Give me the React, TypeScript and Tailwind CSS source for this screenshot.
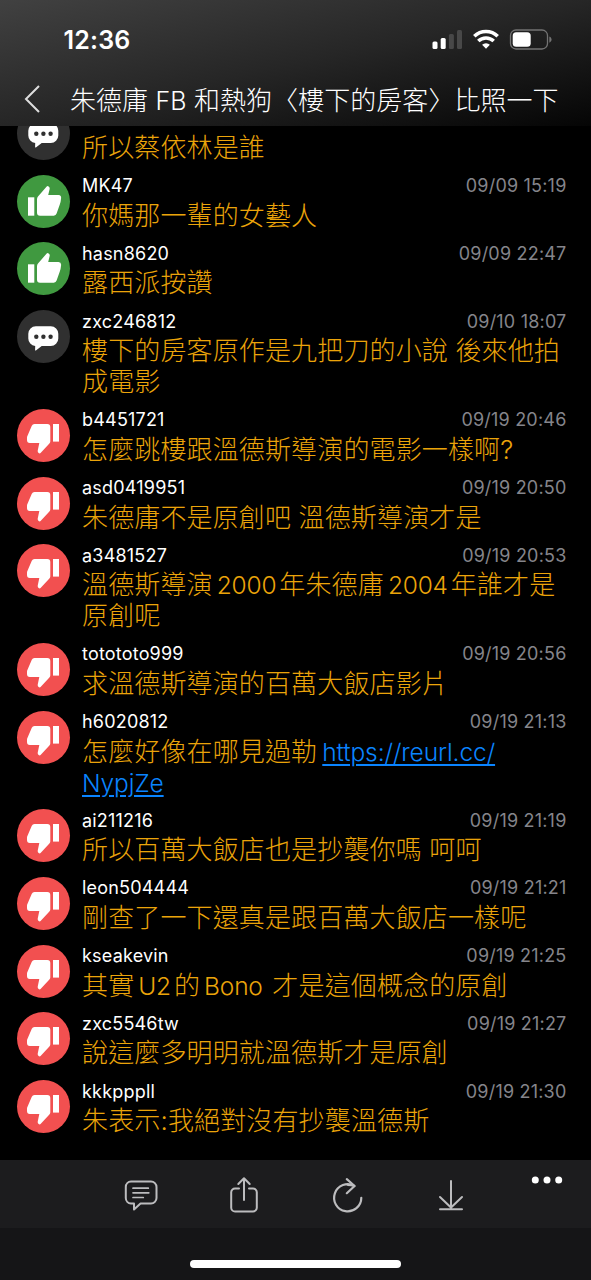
import type { ReactNode } from "react";

type Kind = "push" | "boo" | "arrow";

interface Comment {
  kind: Kind;
  user: string;
  date: string;
  body: ReactNode;
}

function Latin({ children }: { children: string }) {
  return <span className="mr-[3px] ml-[4px] text-[24.500px] leading-[20px] tracking-[-0.2px]">{children}</span>;
}

function Link({ children }: { children: string }) {
  return (
    <a
      href="#"
      className="text-[24.500px] leading-[20px] tracking-[-0.100px] text-[#0a84ff] underline decoration-[1.5px] underline-offset-[3px]"
    >
      {children}
    </a>
  );
}

const comments: Comment[] = [
  { kind: "arrow", user: "", date: "", body: "所以蔡依林是誰" },
  { kind: "push", user: "MK47", date: "09/09 15:19", body: "你媽那一輩的女藝人" },
  { kind: "push", user: "hasn8620", date: "09/09 22:47", body: "露西派按讚" },
  {
    kind: "arrow",
    user: "zxc246812",
    date: "09/10 18:07",
    body: (
      <>
        樓下的房客原作是九把刀的小說 後來他拍
        <br />
        成電影
      </>
    ),
  },
  { kind: "boo", user: "b4451721", date: "09/19 20:46", body: "怎麼跳樓跟溫德斯導演的電影一樣啊?" },
  { kind: "boo", user: "asd0419951", date: "09/19 20:50", body: "朱德庸不是原創吧 溫德斯導演才是" },
  {
    kind: "boo",
    user: "a3481527",
    date: "09/19 20:53",
    body: (
      <>
        溫德斯導演<Latin>2000</Latin>年朱德庸<Latin>2004</Latin>年誰才是
        <br />
        原創呢
      </>
    ),
  },
  { kind: "boo", user: "totototo999", date: "09/19 20:56", body: "求溫德斯導演的百萬大飯店影片" },
  {
    kind: "boo",
    user: "h6020812",
    date: "09/19 21:13",
    body: (
      <>
        <span className="mr-[5px]">怎麼好像在哪見過勒</span>
        <Link>https://reurl.cc/</Link>
        <br />
        <Link>NypjZe</Link>
      </>
    ),
  },
  { kind: "boo", user: "ai211216", date: "09/19 21:19", body: "所以百萬大飯店也是抄襲你嗎 呵呵" },
  { kind: "boo", user: "leon504444", date: "09/19 21:21", body: "剛查了一下還真是跟百萬大飯店一樣呢" },
  {
    kind: "boo",
    user: "kseakevin",
    date: "09/19 21:25",
    body: (
      <>
        其實<Latin>U2</Latin>的<Latin>Bono </Latin>才是這個概念的原創
      </>
    ),
  },
  { kind: "boo", user: "zxc5546tw", date: "09/19 21:27", body: "說這麼多明明就溫德斯才是原創" },
  { kind: "boo", user: "kkkpppll", date: "09/19 21:30", body: "朱表示:我絕對沒有抄襲溫德斯" },
];

const badgeColor: Record<Kind, string> = {
  push: "bg-[#409940]",
  boo: "bg-[#f25050]",
  arrow: "bg-[#303030]",
};

function Badge({ kind }: { kind: Kind }) {
  return (
    <div className={`size-[53px] shrink-0 rounded-full ${badgeColor[kind]}`}>
      <svg viewBox="0 0 53 53" className="size-[53px]" fill="white">
        {kind === "push" && (
          <>
            <path d="M11 22.300h6.300v18.400H11z" />
            <path d="M20 24.200q0-1.500 1-2.600L29.700 11.500q.8-.9 1.900-.1 1.300.9 1.100 2.300L31.200 20h10.300q3 .3 2.600 3.300-.3 3.500-1.300 6.300l-3.200 9q-.7 2.100-2.800 2.100H23q-3 0-3-3z" />
          </>
        )}
        {kind === "boo" && (
          <>
            <path d="M36 15h6v17.600h-6z" />
            <path d="M33.300 32.500q0 1.200-.9 2.100L23.800 43.800q-1 1.100-2.200.2-1.100-.9-.9-2.300L22.300 34H12.800q-2.800-.2-2.800-3V28.700q0-.8.4-1.700l4.400-10.200Q15.600 15 17.500 15h12.800q3 0 3 3z" />
          </>
        )}
        {kind === "arrow" && (
          <>
            <path d="M18.800 16.300h15a7.500 7.500 0 0 1 7.500 7.500v4.700a7.500 7.500 0 0 1-7.500 7.500H24.700l-5.800 4.400c-.5.300-.9.100-.8-.5l.1-3.900a7.500 7.500 0 0 1-6.900-7.500v-4.700a7.500 7.500 0 0 1 7.500-7.500z" />
            <circle cx="19.300" cy="26.700" r="2.200" fill="#303030" />
            <circle cx="26.400" cy="26.700" r="2.200" fill="#303030" />
            <circle cx="33.600" cy="26.700" r="2.200" fill="#303030" />
          </>
        )}
      </svg>
    </div>
  );
}

function CommentRow({ comment }: { comment: Comment }) {
  return (
    <li className="flex gap-[12px] pr-[24.500px] pb-[11.700px] pl-[17px]">
      <Badge kind={comment.kind} />
      <div className="min-w-0 flex-1">
        <div className="flex h-[25px] justify-between pt-[0.500px] text-[18px] leading-[22px]">
          <span className="tracking-[0.2px] text-white">{comment.user}</span>
          <span className="tracking-[0.2px] text-[#85858b]">{comment.date}</span>
        </div>
        <p className="text-[26px] leading-[31px] font-light tracking-[0.14px] whitespace-nowrap text-[#eba40a]">
          {comment.body}
        </p>
      </div>
    </li>
  );
}

function StatusBar() {
  return (
    <div className="flex h-[72px] items-start justify-between pt-[22px] pr-[39px] pl-[63.500px]">
      <span className="text-[25px] leading-[36px] font-semibold tracking-[0.2px] text-white">12:36</span>
      <svg viewBox="0 0 120 22" className="mt-[7px] h-[22px] w-[120px]">
        <rect x="0.500" y="12.500" width="5" height="7.500" rx="1.500" fill="white" />
        <rect x="8.700" y="9" width="5" height="11" rx="1.500" fill="white" />
        <rect x="16.900" y="5" width="5" height="15" rx="1.500" fill="#484848" />
        <rect x="25" y="1" width="5" height="19" rx="1.500" fill="#484848" />
        <g fill="none" stroke="white" strokeWidth="3.500">
          <path d="M42.300 7.300a16.500 16.500 0 0 1 23.400 0" />
          <path d="M46.300 12.100a11 11 0 0 1 15.400 0" />
        </g>
        <path d="M54 19.800l-3.900-4a5.700 5.700 0 0 1 7.800 0z" fill="white" />
        <rect x="78.500" y="1" width="37" height="19" rx="5.500" fill="none" stroke="#737373" strokeWidth="1.300" />
        <rect x="80.700" y="3.300" width="18" height="14.400" rx="3.500" fill="white" />
        <path d="M117.300 7.500c3 1.200 3 5 0 6.200z" fill="#737373" />
      </svg>
    </div>
  );
}

function Toolbar() {
  return (
    <footer className="h-[120px] shrink-0 bg-[#151517]">
      <div className="flex h-[68px] items-center bg-[#1c1c1e] pt-[2px] pl-[121px] text-[#bcbcbe]">
        <svg viewBox="0 0 40 40" className="size-[40px]" fill="none" stroke="currentColor" strokeWidth="2" strokeLinecap="round" strokeLinejoin="round">
          <path d="M10 6.500h20a5.500 5.500 0 0 1 5.500 5.500v11a5.500 5.500 0 0 1-5.500 5.500H19.500L13 34.500v-6h-3A5.500 5.500 0 0 1 4.800 23V12A5.500 5.500 0 0 1 10 6.500z" />
          <path d="M12 13.200h15.300M12 17.800h15.800M12 22.500h10.300" strokeWidth="1.700" />
        </svg>
        <svg viewBox="0 0 40 40" className="ml-[63px] size-[40px]" fill="none" stroke="currentColor" strokeWidth="2" strokeLinecap="round" strokeLinejoin="round">
          <path d="M15 13.500h-4a3.800 3.800 0 0 0-3.800 3.800v15.400a3.800 3.800 0 0 0 3.800 3.800h18a3.800 3.800 0 0 0 3.800-3.800V17.300a3.800 3.800 0 0 0-3.800-3.800h-4" />
          <path d="M20 25V3.300M14.300 9L20 3.300 25.700 9" />
        </svg>
        <svg viewBox="0 0 40 40" className="ml-[63px] size-[40px]" fill="none" stroke="currentColor" strokeWidth="2.200" strokeLinecap="round" strokeLinejoin="round">
          <path d="M34.300 22.800A13.600 13.600 0 1 1 27.300 10.900q-3-1-6.600-1.100" />
          <path d="M19.800 4.200l7.800 6.800-7.800 7.200" />
        </svg>
        <svg viewBox="0 0 40 40" className="ml-[64px] size-[40px]" fill="none" stroke="currentColor" strokeWidth="2" strokeLinecap="round">
          <path d="M20 6v26M9 22l11 10.500L31 22M9 34.300h22" />
        </svg>
        <svg viewBox="0 0 32 8" className="mb-[30px] ml-[60px] h-[8px] w-[32px]" fill="white">
          <circle cx="4.300" cy="4" r="3.500" />
          <circle cx="16" cy="4" r="3.500" />
          <circle cx="27.700" cy="4" r="3.500" />
        </svg>
      </div>
      <div className="mx-auto mt-[32px] h-[8px] w-[211px] rounded-full bg-white" />
    </footer>
  );
}

export default function App() {
  return (
    <div className="flex h-[1280px] w-[591px] flex-col overflow-hidden bg-black font-['Inter','Noto_Sans_CJK_TC',sans-serif]">
      <header className="h-[126px] shrink-0 bg-[linear-gradient(168deg,#414141_0%,#262626_50%,#050505_100%)]">
        <StatusBar />
        <div className="flex h-[54px] items-center pl-[23px]">
          <svg viewBox="0 0 18 28" className="h-[28px] w-[18px]" fill="none" stroke="#dedede" strokeWidth="2">
            <path d="M16 1L3 14l13 13" />
          </svg>
          <h1 className="mt-[3px] ml-[29px] text-[26px] leading-[36px] font-light tracking-[0.050px] whitespace-nowrap text-white">
            朱德庸 <span className="text-[25px]">FB</span> 和熱狗〈樓下的房客〉比照一下
          </h1>
        </div>
      </header>
      <main className="min-h-0 flex-1 overflow-hidden">
        <ul className="-mt-[18.900px]">
          {comments.map((comment, i) => (
            <CommentRow key={i} comment={comment} />
          ))}
        </ul>
      </main>
      <Toolbar />
    </div>
  );
}
